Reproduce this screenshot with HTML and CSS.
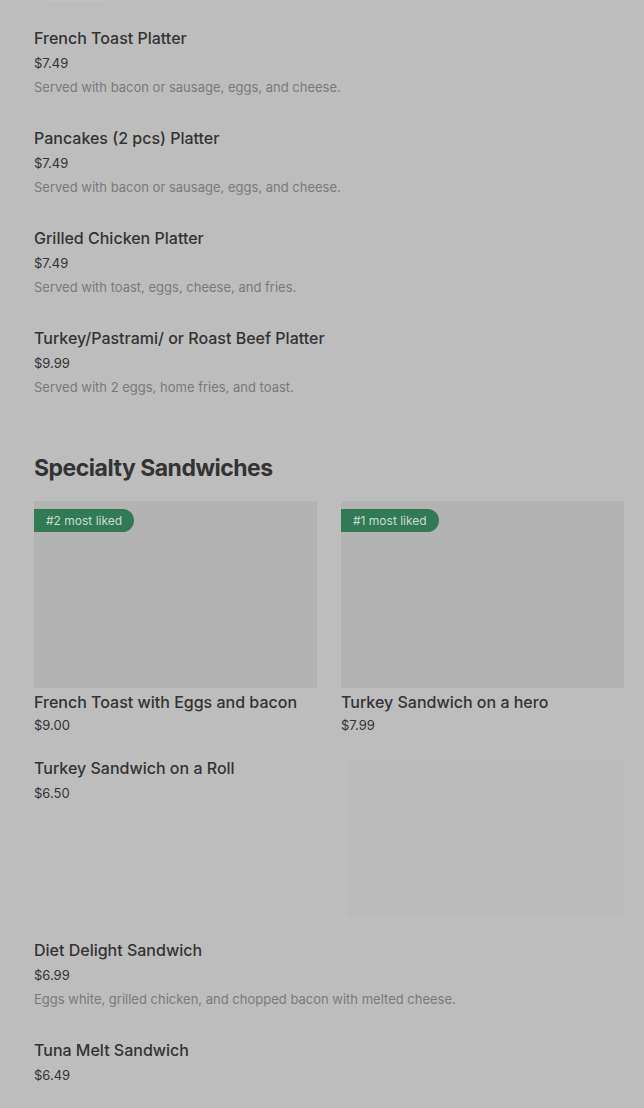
FILE: index.html
```html
<!DOCTYPE html>
<html lang="en">
<head>
    <meta charset="UTF-8">
    <title>Menu</title>
    <link rel="stylesheet" href="styles.css">
</head>
<body>
    <div class="top-strip"></div>
    <div class="menu">
        <div class="item">
            <div class="item-title">French Toast Platter</div>
            <div class="item-price">$7.49</div>
            <div class="item-desc">Served with bacon or sausage, eggs, and cheese.</div>
        </div>
        <div class="item">
            <div class="item-title">Pancakes (2 pcs) Platter</div>
            <div class="item-price">$7.49</div>
            <div class="item-desc">Served with bacon or sausage, eggs, and cheese.</div>
        </div>
        <div class="item">
            <div class="item-title">Grilled Chicken Platter</div>
            <div class="item-price">$7.49</div>
            <div class="item-desc">Served with toast, eggs, cheese, and fries.</div>
        </div>
        <div class="item">
            <div class="item-title">Turkey/Pastrami/ or Roast Beef Platter</div>
            <div class="item-price">$9.99</div>
            <div class="item-desc">Served with 2 eggs, home fries, and toast.</div>
        </div>

        <h2 class="section-title">Specialty Sandwiches</h2>

        <div class="cards">
            <div class="card">
                <div class="card-img">
                    <span class="badge">#2 most liked</span>
                </div>
                <div class="item-title">French Toast with Eggs and bacon</div>
                <div class="item-price">$9.00</div>
            </div>
            <div class="card">
                <div class="card-img">
                    <span class="badge">#1 most liked</span>
                </div>
                <div class="item-title">Turkey Sandwich on a hero</div>
                <div class="item-price">$7.99</div>
            </div>
        </div>

        <div class="row-item">
            <div class="row-text">
                <div class="item-title">Turkey Sandwich on a Roll</div>
                <div class="item-price">$6.50</div>
            </div>
            <div class="row-img"></div>
        </div>

        <div class="item">
            <div class="item-title">Diet Delight Sandwich</div>
            <div class="item-price">$6.99</div>
            <div class="item-desc">Eggs white, grilled chicken, and chopped bacon with melted cheese.</div>
        </div>
        <div class="item">
            <div class="item-title">Tuna Melt Sandwich</div>
            <div class="item-price">$6.49</div>
        </div>
    </div>
</body>
</html>
```

FILE: styles.css
```css
body {
    margin: 0;
    background-color: #bdbdbd;
    font-family: Inter, "Noto Sans", sans-serif;
    color: #333;
}
.top-strip {
    position: absolute;
    top: 0;
    left: 48px;
    width: 56px;
    height: 2px;
    background-color: #c2c2c2;
}
.menu {
    padding: 26px 20px 0 34px;
}
.item {
    margin-bottom: 29px;
}
.item-title {
    font-size: 16px;
    line-height: 24px;
    font-weight: 500;
    color: #333;
}
.item-price {
    font-size: 13px;
    line-height: 20px;
    margin-top: 3px;
    color: #333;
}
.item-desc {
    font-size: 13px;
    line-height: 20px;
    margin-top: 4px;
    color: #7a7a7a;
}
.section-title {
    font-size: 23px;
    line-height: 32px;
    font-weight: 700;
    letter-spacing: -0.5px;
    margin: 55px 0 17px;
    color: #333;
}
.cards {
    display: grid;
    grid-template-columns: 1fr 1fr;
    gap: 24px;
}
.card-img {
    position: relative;
    height: 187px;
    background-color: #b3b3b3;
    margin-bottom: 2px;
}
.card .item-price {
    margin-top: 1px;
}
.badge {
    position: absolute;
    top: 8px;
    left: 0;
    height: 23px;
    line-height: 23px;
    padding: 0 12px;
    font-size: 12px;
    color: #c9dcd0;
    background-color: #327a55;
    border-radius: 0 12px 12px 0;
}
.row-item {
    display: flex;
    justify-content: space-between;
    margin-top: 21px;
    margin-bottom: 22px;
}
.row-img {
    width: 276px;
    height: 156px;
    margin-top: 4px;
    background-color: #bababa;
}
```
